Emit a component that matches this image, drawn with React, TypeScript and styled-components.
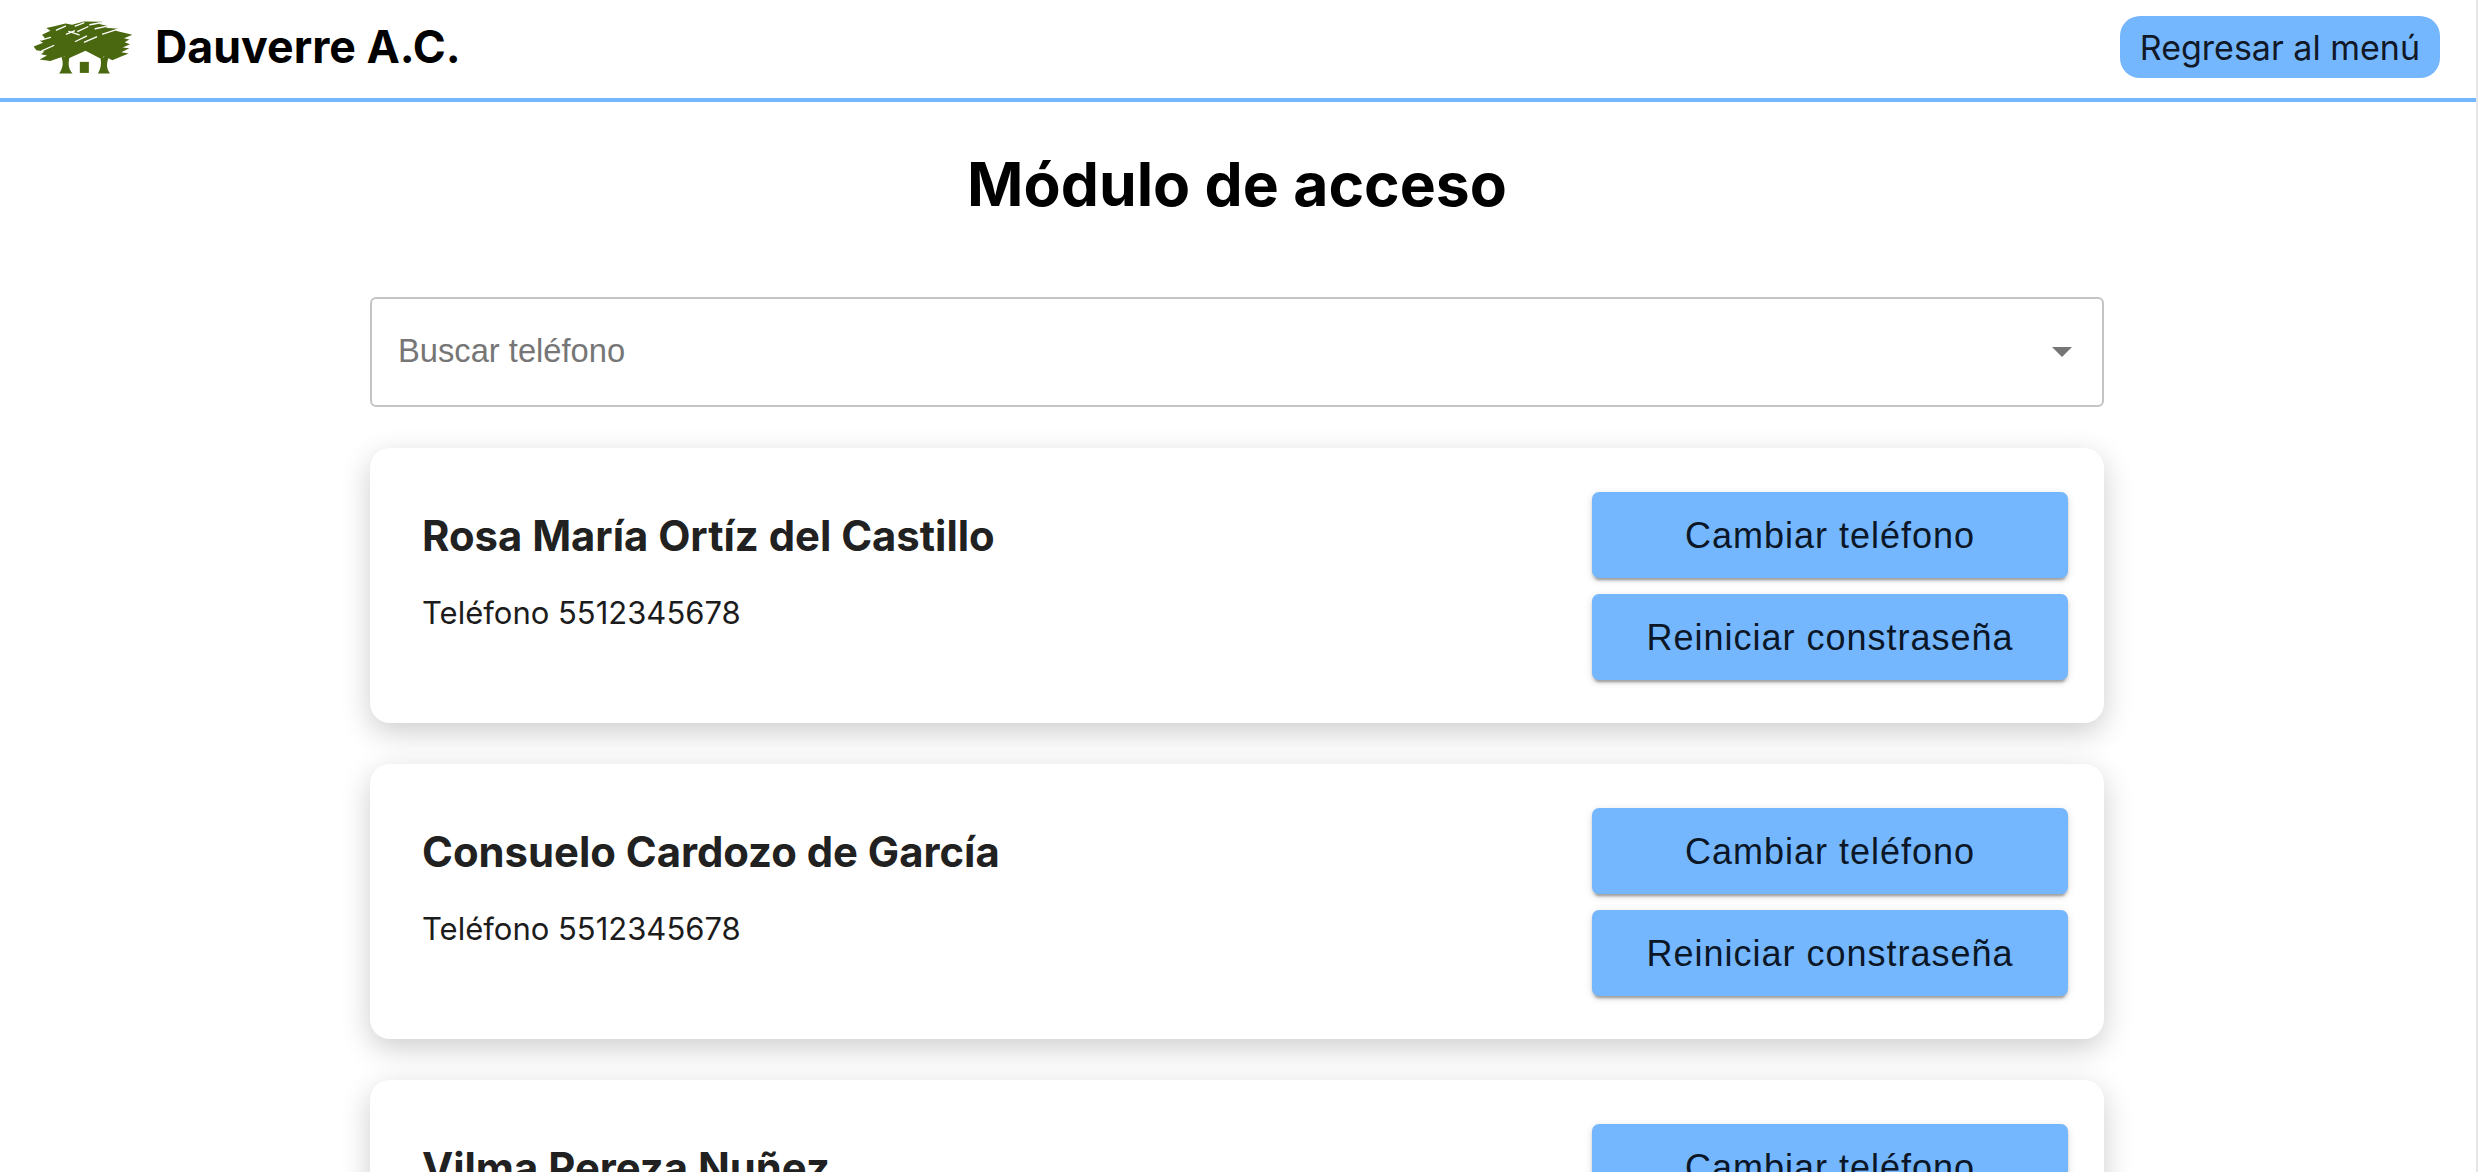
import React from "react";
import styled, { createGlobalStyle } from "styled-components";

const GlobalStyle = createGlobalStyle`
  html, body {
    margin: 0;
    padding: 0;
    background: #fff;
    overflow: hidden;
  }
  * {
    box-sizing: border-box;
  }
`;

const Page = styled.div`
  height: 1172px;
  overflow: hidden;
  border-right: 2px solid #e6e6e6;
  font-family: Inter, "Liberation Sans", sans-serif;
`;

const NavBar = styled.header`
  display: flex;
  align-items: center;
  justify-content: space-between;
  height: 102px;
  padding: 0 36px 4px 32px;
  border-bottom: 4px solid #74b7ff;
`;

const Brand = styled.div`
  display: flex;
  align-items: center;
  gap: 21px;
`;

const BrandName = styled.span`
  font-size: 44.7px;
  font-weight: 700;
  color: #000;
`;

const BackButton = styled.button`
  height: 62px;
  padding: 0 20px;
  border: 0;
  border-radius: 20px;
  background: #74b7ff;
  color: #111827;
  font-family: Inter, sans-serif;
  font-size: 34px;
`;

const Main = styled.main`
  width: 1734px;
  margin-left: 370px;
`;

const Title = styled.h1`
  margin: 0;
  padding: 42px 0 0;
  height: 195px;
  font-size: 60.6px;
  line-height: 80px;
  font-weight: 700;
  text-align: center;
  color: #000;
`;

const SearchBox = styled.div`
  display: flex;
  align-items: center;
  justify-content: space-between;
  height: 110px;
  padding: 0 30px 0 26px;
  border: 2px solid #c4c4c4;
  border-radius: 6px;
  margin-bottom: 41px;
`;

const Placeholder = styled.span`
  position: relative;
  top: -1px;
  font-family: "Liberation Sans", Arial, sans-serif;
  font-size: 32.7px;
  color: #767676;
`;

const CardList = styled.div`
  display: flex;
  flex-direction: column;
  gap: 41px;
`;

const Card = styled.section`
  display: flex;
  flex: none;
  align-items: center;
  justify-content: space-between;
  height: 275px;
  padding: 0 36px 0 52px;
  border-radius: 20px;
  background: #fff;
  box-shadow: 0 9px 30px rgba(0, 0, 0, 0.2);
`;

const Info = styled.div`
  display: flex;
  flex-direction: column;
  gap: 32px;
  margin-top: -28px;
`;

const Name = styled.h2`
  margin: 0;
  font-size: 41.8px;
  line-height: 50px;
  font-weight: 700;
  color: #212121;
`;

const Phone = styled.p`
  margin: 0;
  font-size: 31px;
  line-height: 40px;
  color: #1c1c1c;
`;

const Actions = styled.div`
  display: flex;
  flex-direction: column;
  gap: 16px;
  width: 476px;
`;

const ActionButton = styled.button`
  height: 86px;
  padding: 2px 0 0;
  border: 0;
  border-radius: 7px;
  background: #74b7ff;
  color: #0b1626;
  font-family: "Liberation Sans", Arial, sans-serif;
  font-size: 36px;
  letter-spacing: 1px;
  box-shadow: 0 5px 2px -3px rgba(0, 0, 0, 0.2), 0 3px 3px 0 rgba(0, 0, 0, 0.14),
    0 2px 8px 0 rgba(0, 0, 0, 0.12);
`;

function Logo() {
  const streaks = [
    "M168 88 L195 76", "M224 76 L250 66", "M268 72 L300 66", "M198 100 L222 90",
    "M232 92 L262 78", "M306 100 L350 86", "M284 84 L320 76", "M225 122 L258 106",
    "M252 124 L288 108", "M205 92 L236 102", "M124 150 L160 134", "M122 118 L150 110",
  ];
  return (
    <svg width="102" height="57" viewBox="95 55 305 170" aria-label="Dauverre">
      <path
        fill="#4a680f"
        d="M100 137 L128 126 L118 120 L134 112 L125 102 L150 90 L138 82 L165 76 L195 68 L215 72 L250 62 L305 63 L296 70 L322 76 L316 81 L352 84 L345 90 L395 102 L370 112 L386 116 L372 124 L388 130 L366 140 L386 142 L362 154 L384 158 L360 168 L335 178 L312 166 L298 172 L255 150 L205 172 L190 166 L150 180 L118 176 L140 164 L122 160 L132 152 L108 148 Z"
      />
      <path fill="#4a680f" d="M176 218 C188 200 191 185 180 160 L192 168 L198 160 L208 166 C202 190 204 202 216 218 Z" />
      <path fill="#4a680f" d="M292 218 C302 200 305 185 296 160 L308 170 L316 162 L326 164 C316 190 318 202 328 218 Z" />
      <rect x="238" y="183" width="27" height="33" fill="#4a680f" />
      <g stroke="#fff" strokeWidth="4" strokeLinecap="round">
        {streaks.map((d) => (
          <path key={d} d={d} />
        ))}
      </g>
    </svg>
  );
}

const people = ["Rosa María Ortíz del Castillo", "Consuelo Cardozo de García", "Vilma Pereza Nuñez"];

export default function App() {
  return (
    <Page>
      <GlobalStyle />
      <NavBar>
        <Brand>
          <Logo />
          <BrandName>Dauverre A.C.</BrandName>
        </Brand>
        <BackButton>Regresar al menú</BackButton>
      </NavBar>
      <Main>
        <Title>Módulo de acceso</Title>
        <SearchBox>
          <Placeholder>Buscar teléfono</Placeholder>
          <svg width="20" height="10" viewBox="0 0 20 10">
            <path d="M0 0 L20 0 L10 10 Z" fill="#757575" />
          </svg>
        </SearchBox>
        <CardList>
          {people.map((name) => (
            <Card key={name}>
              <Info>
                <Name>{name}</Name>
                <Phone>Teléfono 5512345678</Phone>
              </Info>
              <Actions>
                <ActionButton>Cambiar teléfono</ActionButton>
                <ActionButton>Reiniciar constraseña</ActionButton>
              </Actions>
            </Card>
          ))}
        </CardList>
      </Main>
    </Page>
  );
}
